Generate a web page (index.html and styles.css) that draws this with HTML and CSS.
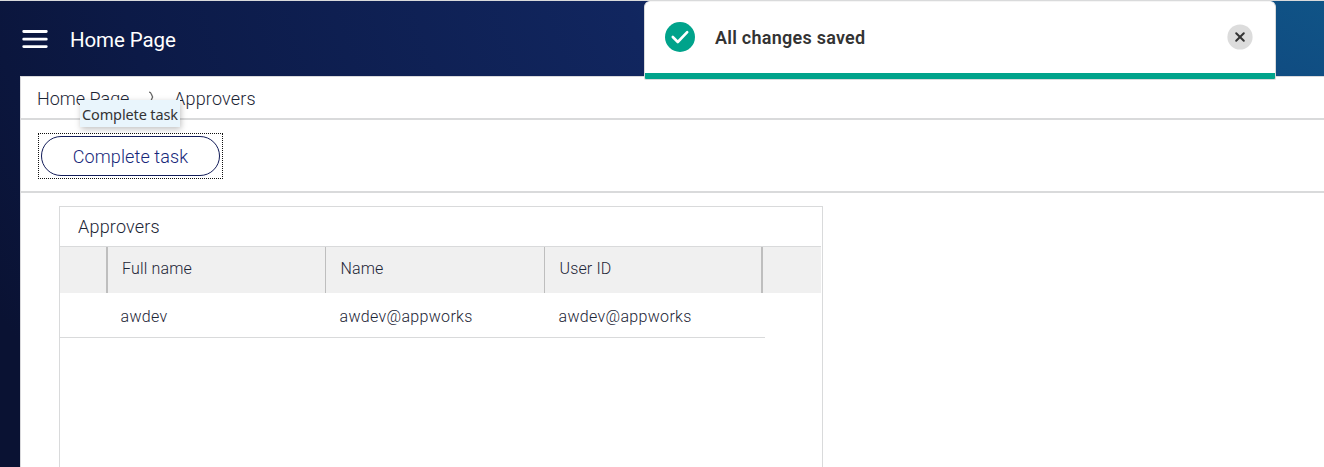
FILE: index.html
```html
<!DOCTYPE html>
<html lang="en">
<head>
<meta charset="utf-8">
<title>Home Page</title>
<link rel="stylesheet" href="styles.css">
</head>
<body>
<div class="app">
  <header class="topbar">
    <svg class="menu" width="26" height="20" viewBox="0 0 26 20" stroke="#fff" stroke-width="2.8" stroke-linecap="round"><path d="M1.7 1.5h22.6M1.7 9.2h22.6M1.7 16.6h22.6"/></svg>
    <h1 class="title"><span>Home Page</span></h1>
  </header>
  <main class="content">
    <nav class="crumbs">
      <span class="crumb-home">Home Page</span>
      <svg class="chevron" width="8" height="12" viewBox="0 0 8 12" fill="none" stroke="#666" stroke-width="1.3"><path d="M1 1.2Q2.6 1.2 3.2 2.8L4.6 6L3.2 9.2Q2.6 10.8 1 10.8"/></svg>
      <span class="crumb-current">Approvers</span>
    </nav>
    <div class="toolbar">
      <div class="focus"><button class="complete"><span>Complete task</span></button></div>
    </div>
    <section class="panel">
      <h2 class="panel-title"><span>Approvers</span></h2>
      <div class="grid head">
        <div class="cell"></div><div class="cell full"><span>Full name</span></div><div class="cell name"><span>Name</span></div><div class="cell user"><span>User ID</span></div><div class="cell last"></div>
      </div>
      <div class="grid row">
        <div class="cell"></div><div class="cell value"><span>awdev</span></div><div class="cell value"><span>awdev@appworks</span></div><div class="cell value"><span>awdev@appworks</span></div>
      </div>
    </section>
  </main>
  <div class="tooltip"><span>Complete task</span></div>
  <div class="toast">
    <svg class="ok" width="30" height="30" viewBox="0 0 30 30"><circle cx="15" cy="15" r="15" fill="#00a38b"/><path d="M7.8 15l5 5L22.2 10.2" fill="none" stroke="#fff" stroke-width="2.6" stroke-linecap="round" stroke-linejoin="round"/></svg>
    <span class="toast-text">All changes saved</span>
    <svg class="close" width="26" height="26" viewBox="0 0 26 26"><circle cx="13" cy="13" r="12.6" fill="#dcdcdc"/><path d="M9.2 9.2l7.6 7.6M16.8 9.2l-7.6 7.6" stroke="#333" stroke-width="2" stroke-linecap="round"/></svg>
  </div>
</div>
</body>
</html>
```
FILE: styles.css
```css
* { box-sizing: border-box; }
body { margin: 0; font-family: Roboto, "Liberation Sans", sans-serif; color: #1c2536; }
.app { position: relative; width: 1324px; height: 467px; overflow: hidden; border-top: 1px solid #d9dadb; background: radial-gradient(ellipse 1650px 1000px at 1500px -100px, #0f6290 0, #104a80 24%, #11265f 54%, #0c1a47 84%, #0a1233 100%); display: flex; flex-direction: column; }
.topbar { height: 75px; flex: none; display: flex; align-items: center; padding: 2px 0 0 22px; gap: 22px; }
.title { margin: 0; color: #fff; font-size: 20.5px; font-weight: 400; line-height: 24px; letter-spacing: -.1px; white-space: nowrap; }
.content { margin-left: 20px; flex: 1; min-height: 0; background: #fff; border-left: 1px solid #d9d9dc; border-top: 1px solid #d9d9dc; }
.crumbs { height: 43px; border-bottom: 2px solid #d9dadb; padding: 1px 0 0 16px; display: flex; align-items: center; font-size: 18px; font-weight: 350; white-space: nowrap; }
.crumb-home { width: 111px; }
.chevron { flex: none; margin: -2px 18px 0 0; }
.crumb-current { letter-spacing: .2px; }
.toolbar { height: 73px; border-bottom: 2px solid #d9dadb; padding: 13px 0 0 17px; }
.focus { width: 185px; height: 46px; border: 1px dotted #111; padding: 2px; }
.complete { display: block; width: 179px; height: 40px; border: 1px solid #111b58; border-radius: 20px; background: #fff; padding: 1px 0 0; color: #16277a; font: 350 18px/38px Roboto, "Liberation Sans", sans-serif; letter-spacing: .12px; }
.panel { margin: 13px 0 0 38px; width: 764px; height: 300px; border: 1px solid #d9dadb; }
.panel-title { margin: 0; height: 39px; padding-left: 18px; font-size: 18px; font-weight: 350; line-height: 40px; letter-spacing: .2px; }
.grid { display: grid; grid-template-columns: 46px 219px 219px 217px 1fr; font-size: 16px; font-weight: 350; letter-spacing: .15px; }
.head { width: 761px; height: 47px; background: #f0f0f0; border-top: 1px solid #d9dadb; line-height: 43px; }
.cell { white-space: nowrap; }
.full { border-left: 2px solid #bebebe; padding-left: 14px; }
.name, .user { border-left: 1px solid #bebebe; padding-left: 14.5px; }
.last { border-left: 2px solid #bebebe; }
.row { width: 705px; height: 45px; border-bottom: 1px solid #d9dadb; line-height: 47px; grid-template-columns: 46px 219px 219px 221px; letter-spacing: .32px; }
.value { padding-left: 14.5px; }
.tooltip { position: absolute; left: 80px; top: 99px; width: 100px; height: 27px; background: #e9f5fc; box-shadow: 1px 2px 6px rgba(0,0,0,.25); padding: 1px 0 0 2px; font: 14.5px/27px "Noto Sans", sans-serif; letter-spacing: -.13px; color: #333; white-space: nowrap; }
.toast { position: absolute; left: 644px; top: 0; width: 632px; height: 79px; background: linear-gradient(#00a38b, #00a38b) 0 71px / 100% 6px no-repeat, #fff; border: 1px solid #d9dadb; border-top-color: #f5f5f5; border-radius: 6px 6px 2px 2px; display: flex; padding: 20px 22px 0 20px; }
.toast-text { margin: 4px 0 0 20px; color: #333; font-size: 18px; font-weight: 650; line-height: 24px; letter-spacing: .25px; white-space: nowrap; }
.ok { flex: none; }
.close { flex: none; margin: 2px 0 0 auto; }
```
